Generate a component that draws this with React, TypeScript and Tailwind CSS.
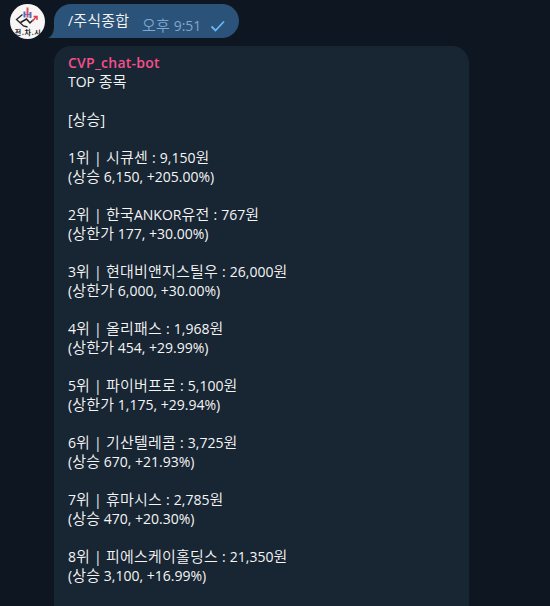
import React from 'react';

const STOCKS = [
  { name: '시큐센', price: '9,150', change: '상승 6,150, +205.00%' },
  { name: '한국ANKOR유전', price: '767', change: '상한가 177, +30.00%' },
  { name: '현대비앤지스틸우', price: '26,000', change: '상한가 6,000, +30.00%' },
  { name: '올리패스', price: '1,968', change: '상한가 454, +29.99%' },
  { name: '파이버프로', price: '5,100', change: '상한가 1,175, +29.94%' },
  { name: '기산텔레콤', price: '3,725', change: '상승 670, +21.93%' },
  { name: '휴마시스', price: '2,785', change: '상승 470, +20.30%' },
  { name: '피에스케이홀딩스', price: '21,350', change: '상승 3,100, +16.99%' },
];

// Hangul runs are set slightly larger and lighter than the latin text around them
const Mixed = ({ text }: { text: string }) => (
  <>
    {text.split(/([가-힣]+)/).map((part, index) =>
      index % 2 ? (
        <span
          key={index}
          className="font-['Open_Sans','Noto_Sans_CJK_KR',sans-serif] text-[15px] font-[350] leading-none tracking-[0.2px]"
        >
          {part}
        </span>
      ) : (
        part
      )
    )}
  </>
);

const Avatar = () => (
  <svg viewBox="0 0 35 35" className="h-[35px] w-[35px] shrink-0 rounded-full bg-[#f7f5f6]">
    {/* Candles */}
    <path d="M14.500 7.500v6M20.500 8v6" stroke="#4a6fc0" strokeWidth="2" />
    <path d="M17.500 3.500v10" stroke="#e05060" strokeWidth="2" />
    <path d="M14.500 10.500h6" stroke="#7a6aa8" strokeWidth="1" />
    {/* Trend line */}
    <path d="M12.500 10.500 6.500 15.500l7 6.500 4 1" fill="none" stroke="#222" strokeWidth="1.300" />
    <path d="M10.500 18.500l6-3.500 3.500 4 3-3" fill="none" stroke="#222" strokeWidth="1.500" />
    <path d="M22.500 17l4-4.500M23.500 12.500h3.500v3.500" fill="none" stroke="#d9434f" strokeWidth="1.500" />
    <text
      x="18"
      y="31"
      textAnchor="middle"
      fontSize="7"
      letterSpacing="0.500"
      fontWeight="700"
      fill="#222"
      fontFamily="'Noto Sans CJK KR', sans-serif"
    >
      전.차.시
    </text>
  </svg>
);

const App = () => {
  return (
    <div className="h-[606px] w-[550px] overflow-hidden bg-[#0e1621] font-['Open_Sans','Noto_Sans_CJK_KR',sans-serif] text-[14px] leading-[19px] text-[#f5f5f5]">
      {/* Sent command */}
      <div className="flex pl-[10px] pt-1">
        <Avatar />
        <div className="flex">
          <svg viewBox="0 0 9 34" className="ml-[3px] h-[34px] w-[9px]">
            <path d="M9 34H0c4-2 6-6 6-12V17h3z" fill="#2b5278" />
          </svg>
          <div className="-ml-[3px] flex h-[34px] w-[185px] rounded-[17px] rounded-bl-none bg-[#2b5278] pl-[14px]">
            <span className="mt-[7px] w-[74px] whitespace-nowrap">
              <Mixed text="/주식종합" />
            </span>
            <span className="mt-[12px] w-[68px] whitespace-nowrap text-[#7da8d3]">
              <Mixed text="오후 9:51" />
            </span>
            <svg viewBox="0 0 16 12" className="mt-[16px] h-3 w-4" fill="none" stroke="#6ab7f5" strokeWidth="1.800">
              <path d="M1.500 6.500 5.500 10.500 14 1.500" />
            </svg>
          </div>
        </div>
      </div>

      {/* Bot reply */}
      <div className="ml-[54px] mt-[7px] h-[600px] w-[415px] whitespace-nowrap rounded-[17px] bg-[#182533] px-[14px] pt-[7px]">
        <p className="font-semibold tracking-[0.23px] text-[#f5508c]">CVP_chat-bot</p>
        <p>
          <Mixed text="TOP 종목" />
        </p>
        <p className="my-[19px]">
          <Mixed text="[상승]" />
        </p>
        {STOCKS.map((stock, index) => (
          <div key={stock.name} className="mb-[19px]">
            <p className="[word-spacing:0.45px]">
              <Mixed text={`${index + 1}위 | ${stock.name} : ${stock.price}원`} />
            </p>
            <p>
              <Mixed text={`(${stock.change})`} />
            </p>
          </div>
        ))}
      </div>
    </div>
  );
};

export default App;
